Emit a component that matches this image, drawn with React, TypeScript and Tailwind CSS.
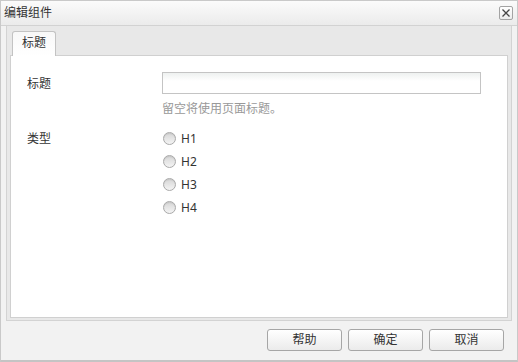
import React from 'react';

const font = { fontFamily: '"Noto Sans", "Noto Sans CJK SC", sans-serif' };

const levels = ['H1', 'H2', 'H3', 'H4'];

const Radio = () => (
  <span className="inline-block w-[13px] h-[13px] rounded-full border border-[#a9a9a9] bg-gradient-to-b from-[#d6d6d6] to-[#f4f4f4] shadow-[inset_0_1px_1px_rgba(0,0,0,0.08)]" />
);

const FooterButton = ({ label }: { label: string }) => (
  <button className="w-[75px] h-[22px] rounded-[3px] border border-[#a6a6a6] bg-gradient-to-b from-white to-[#ebebeb] text-[12px] leading-none text-[#333]">
    {label}
  </button>
);

export default function App() {
  return (
    <div
      className="w-[518px] h-[362px] flex flex-col border border-[#c9c9c9] border-b-[2px] border-b-[#c4c4c4] bg-[#f2f2f2] text-[12px] text-[#333] overflow-hidden"
      style={font}
    >
      {/* header */}
      <div className="h-[25px] shrink-0 flex items-center justify-between pl-[3px] pr-[4px] border-b border-[#d2d2d2] bg-gradient-to-b from-[#fbfbfb] to-[#ebebeb]">
        <span className="leading-none text-[#333]">编辑组件</span>
        <button className="w-[14px] h-[14px] flex items-center justify-center rounded-[2px] border border-[#a3a3a3] bg-gradient-to-b from-white to-[#ececec]">
          <svg width="10" height="10" viewBox="0 0 10 10">
            <path d="M1.5 1.5L8.5 8.5M8.5 1.5L1.5 8.5" stroke="#444" strokeWidth="1.3" />
          </svg>
        </button>
      </div>

      {/* tab panel */}
      <div className="mx-[5px] h-[295px] shrink-0 flex flex-col border-x border-b border-[#d3d3d3] bg-[#e8e8e8]">
        <div className="h-[29px] shrink-0 flex items-end pl-[5px]">
          <div className="w-[44px] h-[25px] -mb-px relative z-10 flex items-center justify-center pb-[2px] rounded-t-[3px] border border-b-0 border-[#c3c3c3] bg-gradient-to-b from-[#f8f8f8] to-white text-[#333]">
            标题
          </div>
        </div>
        <div className="flex-1 mx-[3px] mb-[2px] border border-[#d0d0d0] bg-white pl-[16px] pt-[16px]">
          <div className="flex">
            <div className="w-[135px] pt-[6px] leading-none">标题</div>
            <div className="flex flex-col">
              <div className="w-[319px] h-[22px] border border-[#c4c4c4] bg-gradient-to-b from-[#eef1f0] to-white to-[40%]" />
              <div className="mt-[8px] text-[#999] leading-[14px]">留空将使用页面标题。</div>
            </div>
          </div>
          <div className="flex mt-[16px]">
            <div className="w-[136px] leading-none pt-[1px]">类型</div>
            <div className="flex flex-col gap-[10px]">
              {levels.map((h) => (
                <div key={h} className="flex items-center h-[13px] gap-[5px]">
                  <Radio />
                  <span className="leading-none text-[#333]">{h}</span>
                </div>
              ))}
            </div>
          </div>
        </div>
      </div>

      {/* footer */}
      <div className="flex-1 flex items-center justify-end gap-[6px] pr-[13px] pb-[1px]">
        <FooterButton label="帮助" />
        <FooterButton label="确定" />
        <FooterButton label="取消" />
      </div>
    </div>
  );
}
